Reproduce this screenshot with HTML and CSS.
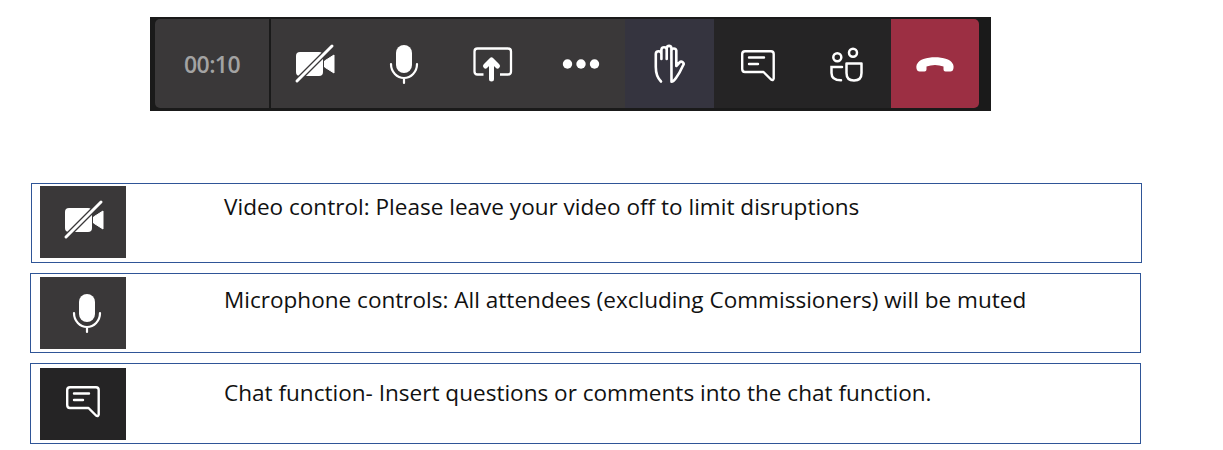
FILE: index.html
```html
<!DOCTYPE html>
<html lang="en">
<head>
<meta charset="utf-8">
<title>Meeting controls</title>
<link rel="stylesheet" href="styles.css">
</head>
<body>
<div class="toolbar">
  <div class="timer">00:10</div>
  <div class="btn gray"><svg class="ico" viewBox="0 0 48 48"><rect x="5" y="12" width="27" height="24" rx="4" fill="#fff"/><path d="M33.500 21 43 15V33L33.500 27Z" fill="#fff" stroke="#fff" stroke-linejoin="round"/><path d="M5 42 42 5" stroke="#3a3839" stroke-width="5.500"/><path d="M6 41 41 6" stroke="#fff" stroke-width="3" stroke-linecap="round"/></svg></div>
  <div class="btn gray"><svg class="ico" viewBox="0 0 48 48"><rect x="16" y="5" width="16" height="28" rx="8" fill="#fff"/><path d="M11 24C11 32 17 38 24 38S37 32 37 24M24 38V43" fill="none" stroke="#fff" stroke-width="2.200" stroke-linecap="round"/></svg></div>
  <div class="btn gray"><svg class="ico" viewBox="0 0 48 48"><path d="M15.500 34.500H9.500Q6.500 34.500 6.500 31.500V11.500Q6.500 8.500 9.500 8.500H40Q43 8.500 43 11.500V31.500Q43 34.500 40 34.500H32" fill="none" stroke="#fff" stroke-width="2.300"/><path d="M23.500 39V20M17.500 26 23.500 20 29.500 26" fill="none" stroke="#fff" stroke-width="5" stroke-linecap="round" stroke-linejoin="round"/></svg></div>
  <div class="btn gray"><svg class="ico" viewBox="0 0 48 48"><circle cx="10.500" cy="24" r="4.700" fill="#fff"/><circle cx="24" cy="24" r="4.700" fill="#fff"/><circle cx="37.500" cy="24" r="4.700" fill="#fff"/></svg></div>
  <div class="btn hand"><svg class="ico" viewBox="0 0 48 48"><path d="M16 41.500C12.500 38 10.800 33 10.800 27V14A2.800 2.800 0 0 1 16.400 14V19M16.400 14V9.500A2.700 2.700 0 0 1 21.700 9.500V19M21.700 9.500V7.800A2.400 2.400 0 0 1 26.400 7.800V19M26.400 10.500A2.500 2.500 0 0 1 31.300 10.500V26L34.500 22.500A2.300 2.300 0 0 1 38 25.500C36 30 34 34 31 38 29.300 40.500 28 41.700 26.500 41.700Z" fill="none" stroke="#fff" stroke-width="2.600" stroke-linejoin="round" stroke-linecap="round"/></svg></div>
  <div class="btn dark"><svg class="ico" viewBox="0 0 48 48"><path d="M11 11.200H37Q39.700 11.200 39.700 14V38.500Q39.200 41 37 39.500L29.500 32H11Q8.200 32 8.200 29V14Q8.200 11.200 11 11.200Z" fill="none" stroke="#fff" stroke-width="2.400" stroke-linejoin="round"/><path d="M15 17.500H30M15 24H24" stroke="#fff" stroke-width="2.400" stroke-linecap="round"/></svg></div>
  <div class="btn dark"><svg class="ico" viewBox="0 0 48 48"><circle cx="15.300" cy="17.300" r="4" fill="none" stroke="#fff" stroke-width="2.500"/><circle cx="31" cy="12.700" r="4" fill="none" stroke="#fff" stroke-width="2.500"/><path d="M20 27H9.500V33Q9.500 40.300 19 40.300" fill="none" stroke="#fff" stroke-width="2.500" stroke-linecap="round"/><path d="M24.500 23.500H39.500V33Q39.500 40.500 32 40.500 24.500 40.500 24.500 33Z" fill="none" stroke="#fff" stroke-width="2.500" stroke-linejoin="round"/></svg></div>
  <div class="btn end"><svg class="ico" viewBox="0 0 48 48"><path d="M6 30C4 25 7 21 12.500 19 19.500 16.500 28.500 16.500 35.500 19 41 21 44 25 42 30 41.500 31.500 40 31.500 38 31.500H34.500C33 31.500 32.500 30.500 32.500 29V26.500C27 24.500 21 24.500 15.500 26.500V29C15.500 30.500 15 31.500 13.500 31.500H10C8 31.500 6.500 31.500 6 30Z" fill="#fff"/></svg></div>
</div>
<div class="note first">
  <div class="thumb gray t-video"><svg class="ico" viewBox="0 0 48 48"><rect x="5" y="12" width="27" height="24" rx="4" fill="#fff"/><path d="M33.500 21 43 15V33L33.500 27Z" fill="#fff" stroke="#fff" stroke-linejoin="round"/><path d="M5 42 42 5" stroke="#3a3839" stroke-width="5.500"/><path d="M6 41 41 6" stroke="#fff" stroke-width="3" stroke-linecap="round"/></svg></div>
  <p class="label">Video control: Please leave your video off to limit disruptions</p>
</div>
<div class="note second">
  <div class="thumb gray t-mic"><svg class="ico" viewBox="0 0 48 48"><rect x="16" y="5" width="16" height="28" rx="8" fill="#fff"/><path d="M11 24C11 32 17 38 24 38S37 32 37 24M24 38V43" fill="none" stroke="#fff" stroke-width="2.200" stroke-linecap="round"/></svg></div>
  <p class="label">Microphone controls: All attendees (excluding Commissioners) will be muted</p>
</div>
<div class="note third">
  <div class="thumb dark t-chat"><svg class="ico" viewBox="0 0 48 48"><path d="M11 11.200H37Q39.700 11.200 39.700 14V38.500Q39.200 41 37 39.500L29.500 32H11Q8.200 32 8.200 29V14Q8.200 11.200 11 11.200Z" fill="none" stroke="#fff" stroke-width="2.400" stroke-linejoin="round"/><path d="M15 17.500H30M15 24H24" stroke="#fff" stroke-width="2.400" stroke-linecap="round"/></svg></div>
  <p class="label">Chat function- Insert questions or comments into the chat function.</p>
</div>
</body>
</html>
```
FILE: styles.css
```css
* { box-sizing: border-box; }
html, body { margin: 0; padding: 0; background: #fff; }
body { padding-top: 17px; width: 1223px; height: 450px; overflow: hidden; font-family: "Open Sans", "Noto Sans", sans-serif; }
.toolbar { display: flex; width: 841px; height: 94px; margin-left: 150px; padding: 2px 12px 3px 5px; background: #1a1a1a; }
.timer { flex: 0 0 114px; display: flex; align-items: center; justify-content: center; background: #3a3839; color: #a3a3a3; font-size: 23px; font-weight: 600; letter-spacing: -0.6px; border-radius: 5px 0 0 5px; margin-right: 2px; }
.btn { flex: 0 0 88.500px; display: flex; align-items: center; justify-content: center; }
.gray { background: #3a3839; }
.dark { background: #252425; }
.hand { background: #35343f; }
.end { background: #9c2f43; border-radius: 0 5px 5px 0; }
.ico { display: block; width: 48px; height: 48px; }
.note { display: flex; width: 1111px; height: 80px; margin: 10px 0 0 30px; padding: 3px 0 0 9px; border: 1px solid #2f5597; }
.note.first { margin: 72px 0 0 31px; padding: 2px 0 0 8px; }
.note.third { height: 81px; padding-top: 4px; }
.thumb { flex: 0 0 86px; height: 72px; }
.t-video { padding: 10px 0 0 20px; }
.t-mic { padding: 12px 0 0 23px; }
.t-chat { padding: 8px 0 0 19px; }
.label { margin: 6px 0 0 98px; font-size: 22.550px; line-height: 30px; color: #111; white-space: nowrap; }
.second .label { margin-top: 8px; }
.third .label { margin-top: 10px; }
```
